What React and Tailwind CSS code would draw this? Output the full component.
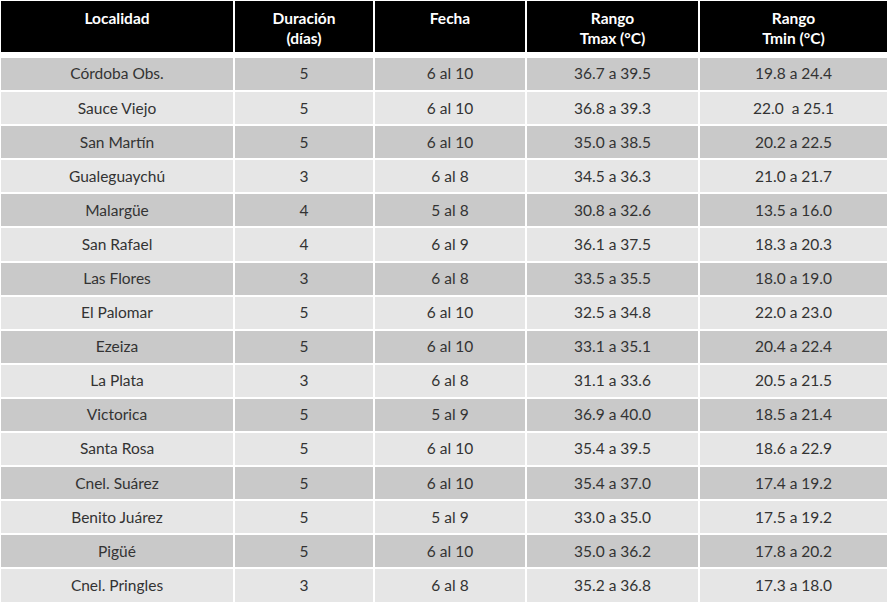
const HEAD = [
  ['Localidad'],
  ['Duración', '(días)'],
  ['Fecha'],
  ['Rango', 'Tmax (°C)'],
  ['Rango', 'Tmin (°C)'],
];

const ROWS = [
  ['Córdoba Obs.', '5', '6 al 10', '36.7 a 39.5', '19.8 a 24.4'],
  ['Sauce Viejo', '5', '6 al 10', '36.8 a 39.3', '22.0  a 25.1'],
  ['San Martín', '5', '6 al 10', '35.0 a 38.5', '20.2 a 22.5'],
  ['Gualeguaychú', '3', '6 al 8', '34.5 a 36.3', '21.0 a 21.7'],
  ['Malargüe', '4', '5 al 8', '30.8 a 32.6', '13.5 a 16.0'],
  ['San Rafael', '4', '6 al 9', '36.1 a 37.5', '18.3 a 20.3'],
  ['Las Flores', '3', '6 al 8', '33.5 a 35.5', '18.0 a 19.0'],
  ['El Palomar', '5', '6 al 10', '32.5 a 34.8', '22.0 a 23.0'],
  ['Ezeiza', '5', '6 al 10', '33.1 a 35.1', '20.4 a 22.4'],
  ['La Plata', '3', '6 al 8', '31.1 a 33.6', '20.5 a 21.5'],
  ['Victorica', '5', '5 al 9', '36.9 a 40.0', '18.5 a 21.4'],
  ['Santa Rosa', '5', '6 al 10', '35.4 a 39.5', '18.6 a 22.9'],
  ['Cnel. Suárez', '5', '6 al 10', '35.4 a 37.0', '17.4 a 19.2'],
  ['Benito Juárez', '5', '5 al 9', '33.0 a 35.0', '17.5 a 19.2'],
  ['Pigüé', '5', '6 al 10', '35.0 a 36.2', '17.8 a 20.2'],
  ['Cnel. Pringles', '3', '6 al 8', '35.2 a 36.8', '17.3 a 18.0'],
];

export default function App() {
  return (
    <div className="w-[890px] h-[602px] bg-white pl-[1px] pt-[1px] font-['Lato','Open_Sans',sans-serif] text-[15.5px]">
      {/* header */}
      <div className="grid grid-cols-[232px_138px_150px_171px_187px] gap-x-[2px]">
        {HEAD.map((lines, i) => (
          <div key={i} className="h-[51px] bg-black text-white font-bold leading-[20px] flex flex-col items-center pt-[7px]">
            {lines.map((l) => (
              <span key={l} className="whitespace-pre">{l}</span>
            ))}
          </div>
        ))}
      </div>

      {/* body */}
      <div className="mt-[6px] grid grid-cols-[232px_138px_150px_171px_187px] gap-x-[2px] gap-y-[2px]">
        {ROWS.map((row, r) =>
          row.map((cell, c) => (
            <div
              key={r + '-' + c}
              className={
                'h-[32.1px] flex items-center justify-center whitespace-pre text-[#333] ' +
                (r % 2 === 0 ? 'bg-[#c9c9c9]' : 'bg-[#e6e6e6]')
              }
            >
              {cell}
            </div>
          ))
        )}
      </div>
    </div>
  );
}
